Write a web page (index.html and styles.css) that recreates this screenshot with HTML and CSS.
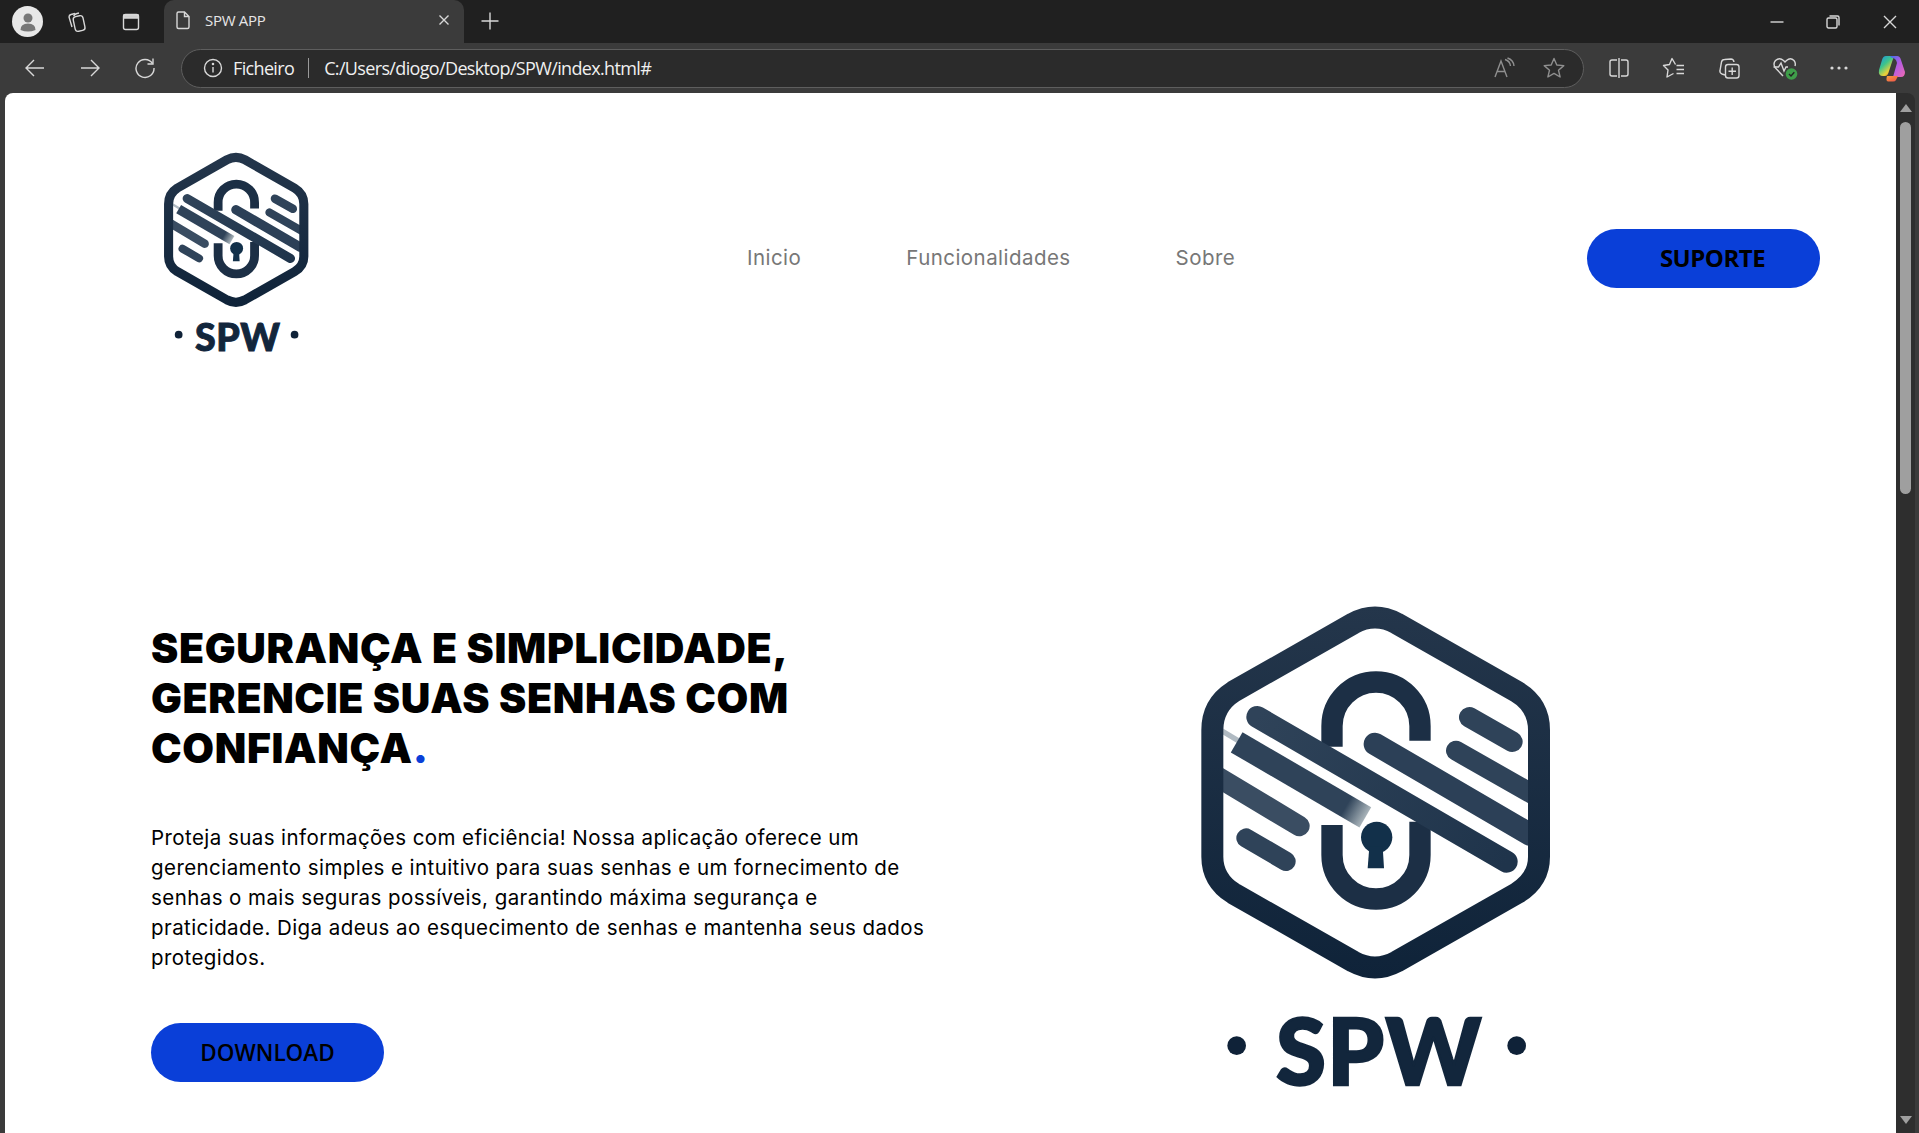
FILE: index.html
```html
<!DOCTYPE html>
<html lang="pt">
<head>
    <meta charset="UTF-8">
    <meta name="viewport" content="width=device-width, initial-scale=1.0">
    <title>SPW APP</title>
    <link rel="stylesheet" href="styles.css">
</head>
<body>

<svg class="defs" width="0" height="0">
    <defs>
        <linearGradient id="fadeStripe" gradientUnits="userSpaceOnUse" x1="170" y1="457" x2="556" y2="682">
            <stop offset="0" stop-color="#2f4359"/>
            <stop offset="0.85" stop-color="#2f4359"/>
            <stop offset="1" stop-color="#a9b4ba"/>
        </linearGradient>
        <linearGradient id="stripeDark" gradientUnits="userSpaceOnUse" x1="230" y1="380" x2="980" y2="815">
            <stop offset="0" stop-color="#2f4359"/>
            <stop offset="1" stop-color="#1f344b"/>
        </linearGradient>
        <linearGradient id="hexStroke" gradientUnits="userSpaceOnUse" x1="0" y1="50" x2="0" y2="1165">
            <stop offset="0" stop-color="#24364b"/>
            <stop offset="1" stop-color="#0f2339"/>
        </linearGradient>
        <linearGradient id="copilotA" x1="0" y1="0" x2="0.7" y2="1">
            <stop offset="0" stop-color="#1d8fe8"/>
            <stop offset="0.45" stop-color="#3cc48c"/>
            <stop offset="0.8" stop-color="#e8d23a"/>
            <stop offset="1" stop-color="#f08a2c"/>
        </linearGradient>
        <linearGradient id="copilotB" x1="0" y1="0" x2="1" y2="1">
            <stop offset="0" stop-color="#3a6fe8"/>
            <stop offset="0.45" stop-color="#b05be6"/>
            <stop offset="1" stop-color="#f06ab0"/>
        </linearGradient>
        <linearGradient id="copilotC" x1="0" y1="0" x2="1" y2="1">
            <stop offset="0" stop-color="#f5a13a"/>
            <stop offset="1" stop-color="#ef4d4d"/>
        </linearGradient>
        <!-- logo desenhado nas coordenadas 1200x1500 -->
        <symbol id="logoSpw" viewBox="0 0 1200 1500">
            <g fill="none" stroke="#2f4359" stroke-linecap="round">
                <path d="M868 382 L997 455" stroke-width="62"/>
                <path d="M828 482 L1060 614" stroke-width="60"/>
                <path d="M100 553 L358 708" stroke-width="62" stroke="#3a4d62"/>
                <path d="M198 744 L318 814" stroke-width="58"/>
            </g>
            <path d="M125 422 L200 467" fill="none" stroke="#b0bac2" stroke-width="16"/>
            <path d="M170 457 L556 682" fill="none" stroke="url(#fadeStripe)" stroke-width="70"/>
            <g fill="none" stroke="#1c2f45" stroke-width="64">
                <path d="M456 470 L456 408 A132 132 0 0 1 720 408 L720 452"/>
                <path d="M456 705 L456 795 A132 132 0 0 0 720 795 L720 695"/>
            </g>
            <path d="M585 462 L1050 733" fill="none" stroke="#2c4057" stroke-width="68" stroke-linecap="round"/>
            <path d="M232 381 L980 815" fill="none" stroke="url(#stripeDark)" stroke-width="66" stroke-linecap="round"/>
            <circle cx="590" cy="742" r="47" fill="#12304a"/>
            <path d="M568 770 L608 770 L612 835 L563 835 Z" fill="#12304a"/>
            <path d="M520 100 Q585 65 650 100 L1010 305 Q1077 345 1077 420 L1077 800 Q1077 870 1010 910 L650 1115 Q585 1150 520 1115 L160 910 Q97 870 97 800 L97 420 Q97 345 160 305 Z" fill="none" stroke="url(#hexStroke)" stroke-width="66" stroke-linejoin="round"/>
            <circle cx="170" cy="1367" r="28" fill="#0f2238"/>
            <circle cx="1010" cy="1367" r="28" fill="#0f2238"/>
            <text class="logo-text" x="288" y="1486" textLength="616" lengthAdjust="spacing">SPW</text>
        </symbol>
    </defs>
</svg>

<!-- barra de abas -->
<div class="tab-strip">
    <div class="avatar">
        <svg width="24" height="24" viewBox="0 0 24 24"><circle cx="12" cy="8" r="4.5" fill="#777"/><path d="M4.5 20 Q4.5 13.5 12 13.5 Q19.5 13.5 19.5 20 Q12 23 4.5 20 Z" fill="#777"/></svg>
    </div>
    <button class="strip-btn" type="button">
        <svg width="22" height="22" viewBox="0 0 22 22" class="icon"><rect x="8" y="5" width="10" height="15" rx="3" transform="rotate(-12 13 12)"/><path d="M6 16 L3 6 Q3 4 5 3.5 L9 2.5"/><path d="M8.5 5 L8 4.5 Q9 3 11 2.5 L13 2"/></svg>
    </button>
    <button class="strip-btn" type="button">
        <svg width="20" height="20" viewBox="0 0 20 20" class="icon"><rect x="2.5" y="2.5" width="15" height="15" rx="2"/><path d="M3 3 H17 V6 H3 Z" fill="#cfcfcf"/></svg>
    </button>
    <div class="tab">
        <svg width="20" height="20" viewBox="0 0 20 20" class="icon"><path d="M4 3.5 Q4 2 5.5 2 H11.5 L16 6.5 V17 Q16 18.5 14.5 18.5 H5.5 Q4 18.5 4 17 Z M11.5 2 V6.5 H16"/></svg>
        <span class="tab-title">SPW APP</span>
        <svg class="icon tab-close" width="12" height="12" viewBox="0 0 12 12"><path d="M1.5 1.5 L10.5 10.5 M10.5 1.5 L1.5 10.5"/></svg>
    </div>
    <button class="strip-btn new-tab" type="button">
        <svg width="20" height="20" viewBox="0 0 20 20" class="icon"><path d="M10 1.5 V18.5 M1.5 10 H18.5"/></svg>
    </button>
    <div class="window-controls">
        <button class="win-btn" type="button"><svg width="14" height="14" viewBox="0 0 14 14" class="icon"><path d="M0.5 7 H13.5"/></svg></button>
        <button class="win-btn" type="button"><svg width="14" height="14" viewBox="0 0 14 14" class="icon"><rect x="1" y="3" width="10" height="10" rx="1.5"/><path d="M3.5 1 H11.5 Q13 1 13 2.5 V10.5"/></svg></button>
        <button class="win-btn win-close" type="button"><svg width="14" height="14" viewBox="0 0 14 14" class="icon"><path d="M1 1 L13 13 M13 1 L1 13"/></svg></button>
    </div>
</div>

<!-- barra de endereco -->
<div class="toolbar">
    <button class="tool-btn" type="button"><svg width="22" height="22" viewBox="0 0 22 22" class="icon"><path d="M20 11 H2 M10 3 L2 11 L10 19"/></svg></button>
    <button class="tool-btn" type="button"><svg width="22" height="22" viewBox="0 0 22 22" class="icon"><path d="M2 11 H20 M12 3 L20 11 L12 19"/></svg></button>
    <button class="tool-btn" type="button"><svg width="22" height="22" viewBox="0 0 22 22" class="icon"><path d="M18.5 6.5 A9 9 0 1 0 20 11"/><path d="M19 1.5 V7 H13.5"/></svg></button>
    <div class="address-bar">
        <svg width="20" height="20" viewBox="0 0 20 20" class="icon"><circle cx="10" cy="10" r="8.5"/><path d="M10 9 V14.5"/><circle cx="10" cy="6" r="0.6"/></svg>
        <span class="site-info">Ficheiro</span>
        <span class="address-sep"></span>
        <span class="address-url">C:/Users/diogo/Desktop/SPW/index.html#</span>
        <div class="address-actions">
            <svg width="22" height="22" viewBox="0 0 22 22" class="icon icon-dim"><path d="M2 20 L8 4 L14 20 M4.5 14.5 H11.5"/><path d="M12 2.5 Q17 4 17.5 9 M14.5 1 Q20.5 3 21 9"/></svg>
            <svg width="22" height="22" viewBox="0 0 22 22" class="icon icon-dim"><path d="M11 1.5 L13.8 8 L20.8 8.6 L15.5 13.2 L17.1 20 L11 16.4 L4.9 20 L6.5 13.2 L1.2 8.6 L8.2 8 Z" stroke-linejoin="round"/></svg>
        </div>
    </div>
    <div class="tool-group">
        <button class="tool-btn" type="button"><svg width="22" height="22" viewBox="0 0 22 22" class="icon"><path d="M9 3 H4 Q2 3 2 5 V17 Q2 19 4 19 H9 M13 3 H18 Q20 3 20 5 V17 Q20 19 18 19 H13 M11 1 V21"/></svg></button>
        <button class="tool-btn" type="button"><svg width="24" height="24" viewBox="0 0 24 24" class="icon"><path d="M13.5 8.5 L10 2.5 L7.5 8.5 L1.5 9.5 L6 14 L5 21 L11.5 17.5" stroke-linejoin="round"/><path d="M14.5 9.5 H22 M14.5 13.5 H22 M14.5 17.5 H22"/></svg></button>
        <button class="tool-btn" type="button"><svg width="24" height="24" viewBox="0 0 24 24" class="icon"><path d="M8 19 L5 18 Q2.5 17 3 14.5 L4.5 6 Q5 3.5 7.5 3.5 L14 3 Q16.5 3 17 6"/><rect x="8.5" y="8.5" width="13.5" height="13.5" rx="2.5"/><path d="M15.2 11.5 V19 M11.5 15.2 H19"/></svg></button>
        <button class="tool-btn heart-btn" type="button"><svg width="26" height="26" viewBox="0 0 26 26" class="icon"><path d="M11 21 L3.5 13 Q0.5 9 3.5 5.5 Q7.5 2 11.5 5.5 L13 7 L14.5 5.5 Q18.5 2 22 5.5 Q24 8 23 11"/><path d="M1.5 12 H6.5 L9 8 L12 16 L14 12 H16"/><circle cx="19.5" cy="19" r="5.8" fill="#3f9e4a" stroke="none"/><path d="M17 19 L19 21 L22.3 17.2" stroke="#222"/></svg></button>
        <button class="tool-btn" type="button"><svg width="20" height="6" viewBox="0 0 20 6"><circle cx="3" cy="3" r="1.6" fill="#d8d8d8"/><circle cx="10" cy="3" r="1.6" fill="#d8d8d8"/><circle cx="17" cy="3" r="1.6" fill="#d8d8d8"/></svg></button>
        <button class="tool-btn copilot-btn" type="button">
            <svg width="28" height="27" viewBox="0 0 28 27">
                <path d="M8 1 H16 L11 16 Q10 21 7 21 H5 Q0 21 1 15 L4 5 Q5 1 8 1 Z" fill="url(#copilotA)"/>
                <path d="M12 1 H19 Q22 1 23 5 L27 17 Q27 22 23 22 H15 L19 8 Q18 3 14 3 Z" fill="url(#copilotB)"/>
                <path d="M9 21 H20 L18 25 Q17 27 14 26.5 H10 Q7.5 26 9 21 Z" fill="url(#copilotC)"/>
            </svg>
        </button>
    </div>
</div>

<div class="browser-body">
    <div class="page">
        <header class="site-header">
            <svg class="logo-small"><use href="#logoSpw"/></svg>
            <nav class="site-nav">
                <a href="#">Inicio</a>
                <a href="#">Funcionalidades</a>
                <a href="#">Sobre</a>
            </nav>
            <a href="#" class="btn btn-support">SUPORTE</a>
        </header>

        <section class="hero">
            <div class="hero-text">
                <h1>SEGURANÇA E SIMPLICIDADE,<br>GERENCIE SUAS SENHAS COM<br>CONFIANÇA<span class="dot">.</span></h1>
                <p>Proteja suas informações com eficiência! Nossa aplicação oferece um gerenciamento simples e intuitivo para suas senhas e um fornecimento de senhas o mais seguras possíveis, garantindo máxima segurança e praticidade. Diga adeus ao esquecimento de senhas e mantenha seus dados protegidos.</p>
                <a href="#" class="btn btn-download">DOWNLOAD</a>
            </div>
            <svg class="logo-large"><use href="#logoSpw"/></svg>
        </section>
    </div>

    <div class="scrollbar">
        <span class="arrow-up"></span>
        <span class="thumb"></span>
        <span class="arrow-down"></span>
    </div>
</div>

</body>
</html>
```

FILE: styles.css
```css
/* geral */
* {
    box-sizing: border-box;
}

html, body {
    margin: 0;
    height: 1133px;
    overflow: hidden;
}

body {
    display: flex;
    flex-direction: column;
    background: #3b3b3b;
    font-family: "Inter", "Liberation Sans", sans-serif;
}

button {
    background: none;
    border: none;
    padding: 0;
}

.defs {
    display: block;
    height: 0;
}

.icon {
    fill: none;
    stroke: #d8d8d8;
    stroke-width: 1.4;
}

.icon-dim {
    stroke: #8f8f8f;
}

/* abas */
.tab-strip {
    height: 43px;
    flex: none;
    background: #202020;
    display: flex;
    align-items: center;
    padding-left: 12px;
}

.avatar {
    width: 31px;
    height: 31px;
    border-radius: 50%;
    background: #e8e8e8;
    display: flex;
    align-items: center;
    justify-content: center;
}

.strip-btn {
    width: 54px;
    height: 43px;
    display: flex;
    align-items: center;
    justify-content: center;
}

.strip-btn:nth-child(2) {
    margin-left: 7px;
}

.tab {
    width: 300px;
    height: 43px;
    margin-left: 6px;
    background: #3b3b3b;
    border-radius: 10px 10px 0 0;
    display: flex;
    align-items: center;
    padding: 0 14px 4px 9px;
    color: #e6e6e6;
}

.tab-title {
    margin-left: 12px;
    font-family: "Open Sans", sans-serif;
    font-size: 15px;
    letter-spacing: -0.3px;
}

.tab-close {
    margin-left: auto;
}

.new-tab {
    width: 52px;
    padding-bottom: 2px;
}

.window-controls {
    margin-left: auto;
    display: flex;
}

.win-btn {
    width: 56px;
    height: 43px;
    display: flex;
    align-items: center;
    justify-content: center;
}

.win-close {
    width: 58px;
}

/* barra de endereco */
.toolbar {
    height: 50px;
    flex: none;
    background: #3b3b3b;
    display: flex;
    align-items: center;
    padding-left: 7px;
}

.tool-btn {
    width: 55px;
    height: 40px;
    flex: none;
    display: flex;
    align-items: center;
    justify-content: center;
}

.address-bar {
    width: 1403px;
    height: 39px;
    margin-left: 9px;
    flex: none;
    background: #2b2b2b;
    border: 1.5px solid #5e5e5e;
    border-radius: 20px;
    display: flex;
    align-items: center;
    padding-left: 21px;
    color: #f0f0f0;
    font-family: "Open Sans", sans-serif;
    font-size: 18px;
    letter-spacing: -0.65px;
}

.site-info {
    margin-left: 10px;
}

.address-sep {
    width: 1px;
    height: 20px;
    margin: 0 15px 0 14px;
    background: #9a9a9a;
}

.address-actions {
    margin-left: auto;
    margin-right: 18px;
    display: flex;
    gap: 28px;
}

.tool-group {
    margin-left: 7px;
    display: flex;
    flex: none;
}

.heart-btn {
    padding-left: 3px;
}

.copilot-btn {
    width: 52px;
}

/* pagina */
.browser-body {
    flex: 1;
    min-height: 0;
    display: flex;
    padding-left: 5px;
    padding-right: 4px;
}

.page {
    flex: 1;
    min-width: 0;
    background: #fff;
    border-radius: 8px 0 0 0;
    overflow: hidden;
}

.site-header {
    display: flex;
    align-items: flex-start;
    padding-top: 53px;
    padding-left: 150px;
}

.logo-small {
    width: 166px;
    height: 207px;
    flex: none;
}

.site-nav {
    display: flex;
    gap: 105px;
    margin-left: 426px;
    margin-top: 100px;
}

.site-nav a {
    color: #777;
    font-size: 20.5px;
    line-height: 24px;
    letter-spacing: 0.45px;
    text-decoration: none;
}

.btn {
    display: flex;
    align-items: center;
    justify-content: center;
    width: 233px;
    height: 59px;
    background: #0a3fd8;
    border-radius: 30px;
    color: #000;
    font-family: "Open Sans", sans-serif;
    font-weight: 700;
    font-size: 24px;
    text-decoration: none;
}

.btn-support {
    margin-left: auto;
    margin-right: 76px;
    margin-top: 83px;
    padding: 0 0 2px 18px;
    letter-spacing: -0.5px;
}

.hero {
    display: flex;
    margin-top: 237px;
    padding-left: 146px;
}

.hero-text {
    width: 790px;
    padding-top: 33px;
    flex: none;
}

h1 {
    margin: 0;
    color: #000;
    font-size: 41px;
    font-weight: 900;
    line-height: 50px;
    letter-spacing: 0.65px;
}

.dot {
    color: #0a3fd8;
}

.hero-text p {
    max-width: 788px;
    margin: 50px 0 50px;
    color: #000;
    font-size: 20.5px;
    line-height: 30px;
    letter-spacing: 0.43px;
}

.btn-download {
    font-size: 22.5px;
    font-weight: 600;
}

.logo-large {
    width: 400px;
    height: 500px;
    flex: none;
    margin-left: 239px;
}

.logo-text {
    font-family: "Lato", sans-serif;
    font-weight: 900;
    font-size: 272px;
    fill: #12263c;
    stroke: #12263c;
    stroke-width: 7px;
}

/* barra de rolagem */
.scrollbar {
    width: 19px;
    flex: none;
    background: #2e2e2e;
    border-radius: 0 8px 0 0;
    display: flex;
    flex-direction: column;
    align-items: center;
    padding: 11px 0 9px;
}

.arrow-up, .arrow-down {
    width: 0;
    height: 0;
    border-left: 6px solid transparent;
    border-right: 6px solid transparent;
}

.arrow-up {
    border-bottom: 8px solid #9f9f9f;
}

.arrow-down {
    margin-top: auto;
    border-top: 8px solid #9f9f9f;
}

.thumb {
    width: 11px;
    height: 372px;
    margin-top: 10px;
    background: #9f9f9f;
    border-radius: 6px;
}
```
